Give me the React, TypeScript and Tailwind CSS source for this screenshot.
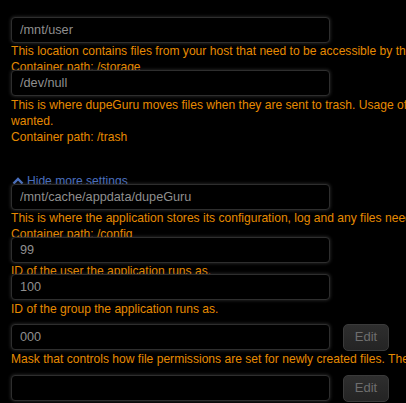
const font = { fontFamily: '"Liberation Sans", Arial, sans-serif' };

function Field({ value, edit }: { value: string; edit?: boolean }) {
  return (
    <div className="flex h-[26px] items-center">
      <input
        type="text"
        readOnly
        value={value}
        className="h-[26px] w-[319px] shrink-0 rounded-[4px] border border-[#2e2e2e] bg-black pl-2 text-[12.7px] text-[#8f8f8f] shadow-[0_0_3px_1px_rgba(90,90,90,0.35)] outline-none"
        style={font}
      />
      {edit && (
        <button
          type="button"
          className="ml-[13px] h-[27px] w-[46px] shrink-0 rounded-[5px] border border-[#3a3a3a] bg-gradient-to-b from-[#2e2e2e] to-[#242424] text-[13px] text-[#6e6e6e]"
          style={font}
        >
          Edit
        </button>
      )}
    </div>
  );
}

function Desc({ h, children }: { h: number; children: React.ReactNode }) {
  return (
    <div
      className="w-[600px] overflow-hidden whitespace-nowrap text-[12.08px] leading-4 text-[#e68a00]"
      style={{ height: h }}
    >
      {children}
    </div>
  );
}

export default function App() {
  return (
    <div className="h-[403px] w-[406px] overflow-hidden bg-black pl-[11px] pt-[17px]" style={font}>
      <Field value="/mnt/user" />
      <Desc h={27}>
        <div>
          This location contains files from your host that need to be accessible by the application.
        </div>
        <div>Container path: /storage</div>
      </Desc>

      <Field value="/dev/null" />
      <Desc h={88}>
        <div className="pt-px">
          <div>
            This is where dupeGuru moves files when they are sent to trash. Usage of this path is only needed if this feature is
          </div>
          <div>wanted.</div>
          <div>Container path: /trash</div>
        </div>
        <a href="#" className="mt-[28px] flex items-center gap-[3px] text-[#4a70c0]">
          <svg width="12" height="8" viewBox="0 0 12 8" className="ml-px">
            <path d="M1.5 6.5 L6 2 L10.5 6.5" fill="none" stroke="#4a70c0" strokeWidth="2.4" />
          </svg>
          Hide more settings
        </a>
      </Desc>

      <Field value="/mnt/cache/appdata/dupeGuru" />
      <Desc h={27}>
        <div>
          This is where the application stores its configuration, log and any files needed for its operation.
        </div>
        <div>Container path: /config</div>
      </Desc>

      <Field value="99" />
      <Desc h={11}>
        <div>ID of the user the application runs as.</div>
      </Desc>

      <Field value="100" />
      <Desc h={24}>
        <div className="pt-px">ID of the group the application runs as.</div>
      </Desc>

      <Field value="000" edit />
      <Desc h={25}>
        <div className="pt-px">
          Mask that controls how file permissions are set for newly created files. The value is octal.
        </div>
      </Desc>

      <Field value="" edit />
    </div>
  );
}
